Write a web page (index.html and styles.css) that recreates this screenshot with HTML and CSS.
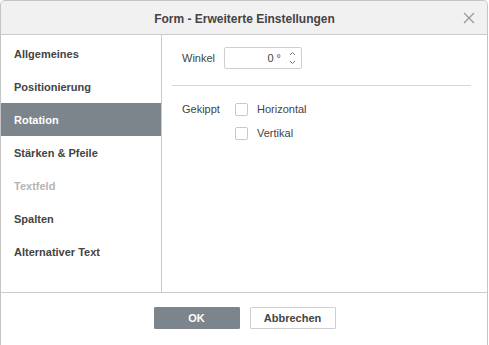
FILE: index.html
```html
<!DOCTYPE html>
<html lang="de">
<head>
<meta charset="utf-8">
<title>Form - Erweiterte Einstellungen</title>
<link rel="stylesheet" href="styles.css">
</head>
<body>
<div class="dialog">
  <div class="header">
    <span class="title">Form - Erweiterte Einstellungen</span>
    <span class="close">
      <svg width="12" height="12" viewBox="0 0 12 12"><path d="M1 1 L11 11 M11 1 L1 11" stroke="#989898" stroke-width="1.2" fill="none"/></svg>
    </span>
  </div>
  <div class="main">
    <div class="sidebar">
      <div class="item">Allgemeines</div>
      <div class="item">Positionierung</div>
      <div class="item active">Rotation</div>
      <div class="item">Stärken &amp; Pfeile</div>
      <div class="item disabled">Textfeld</div>
      <div class="item">Spalten</div>
      <div class="item">Alternativer Text</div>
    </div>
    <div class="content">
      <div class="row angle-row">
        <span class="label">Winkel</span>
        <div class="spin">
          <span class="value">0 °</span>
          <span class="arrows">
            <svg width="7" height="16" viewBox="0 0 7 16"><path d="M1 5 L3.5 2.5 L6 5" stroke="#777" stroke-width="1" fill="none"/><path d="M1 11 L3.5 13.5 L6 11" stroke="#777" stroke-width="1" fill="none"/></svg>
          </span>
        </div>
      </div>
      <div class="sep"></div>
      <div class="row flip-row">
        <span class="label">Gekippt</span>
        <div class="checks">
          <label class="check"><span class="box"></span>Horizontal</label>
          <label class="check"><span class="box"></span>Vertikal</label>
        </div>
      </div>
    </div>
  </div>
  <div class="footer">
    <button class="btn primary">OK</button>
    <button class="btn">Abbrechen</button>
  </div>
</div>
</body>
</html>
```

FILE: styles.css
```css
* { box-sizing: border-box; }
html, body { margin: 0; padding: 0; background: #fff; }
body {
  font-family: "Liberation Sans", Arial, sans-serif;
  font-size: 11px;
  color: #444;
}
.dialog {
  width: 488px;
  height: 345px;
  border: 1px solid #c4c4c4;
  border-bottom: none;
  border-radius: 5px 5px 0 0;
  display: flex;
  flex-direction: column;
  overflow: hidden;
}
.header {
  height: 34px;
  background: #f1f1f1;
  border-bottom: 1px solid #cbcbcb;
  display: flex;
  align-items: center;
  justify-content: center;
  position: relative;
}
.title {
  font-size: 12px;
  font-weight: bold;
  color: #444;
  margin-left: 1px;
  margin-top: 2px;
}
.close {
  position: absolute;
  right: 12px;
  top: 11px;
  width: 12px;
  height: 12px;
  display: flex;
}
.main {
  height: 258px;
  display: flex;
  border-bottom: 1px solid #cbcbcb;
}
.sidebar {
  width: 161px;
  border-right: 1px solid #cbcbcb;
  padding-top: 2px;
  display: flex;
  flex-direction: column;
}
.item {
  height: 33px;
  line-height: 32px;
  padding-top: 1px;
  padding-left: 13px;
  font-weight: bold;
  color: #444;
}
.item.active {
  background: #7d858c;
  color: #fff;
}
.item.disabled {
  color: #b5b5b5;
}
.content {
  flex: 1;
  padding: 12px 16px 0 10px;
}
.row {
  display: flex;
  padding-left: 10px;
}
.label {
  width: 42px;
}
.angle-row {
  align-items: center;
}
.spin {
  width: 78px;
  height: 22px;
  border: 1px solid #cfcfcf;
  border-radius: 2px;
  display: flex;
  align-items: center;
  justify-content: flex-end;
  padding-right: 5px;
}
.value {
  margin-right: 8px;
  color: #444;
}
.arrows {
  display: flex;
  margin-top: -1px;
}
.sep {
  height: 1px;
  background: #d6d6d6;
  margin-top: 16px;
}
.flip-row {
  margin-top: 17px;
}
.flip-row .label {
  width: 53px;
  line-height: 13px;
}
.checks {
  display: flex;
  flex-direction: column;
  gap: 11px;
}
.check {
  display: flex;
  align-items: center;
  line-height: 13px;
}
.box {
  width: 13px;
  height: 13px;
  border: 1px solid #c8c8c8;
  border-radius: 2px;
  margin-right: 9px;
}
.footer {
  flex: 1;
  display: flex;
  justify-content: center;
  gap: 10px;
  padding-top: 14px;
  padding-left: 1px;
}
.btn {
  width: 86px;
  height: 22px;
  border: 1px solid #cfcfcf;
  background: #fff;
  font-family: "Liberation Sans", Arial, sans-serif;
  font-size: 11px;
  font-weight: bold;
  color: #444;
  padding: 0;
  border-radius: 1px;
}
.btn.primary {
  background: #7d858c;
  border-color: #7d858c;
  color: #fff;
}
```
